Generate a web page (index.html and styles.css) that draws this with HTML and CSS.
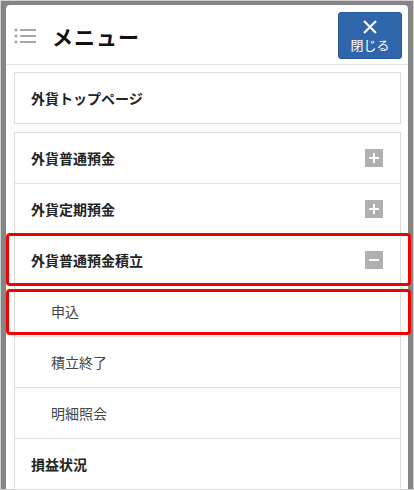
FILE: index.html
```html
<!DOCTYPE html>
<html lang="ja">
<head>
<meta charset="utf-8">
<link rel="stylesheet" href="styles.css">
</head>
<body>
<div class="frame">
  <div class="panel">
    <header class="head">
      <div class="head-left">
        <svg class="list-icon" width="22" height="16" viewBox="0 0 22 16">
          <circle cx="2" cy="2" r="1.6" fill="#a8a8a8"/>
          <circle cx="2" cy="8" r="1.6" fill="#a8a8a8"/>
          <circle cx="2" cy="14" r="1.6" fill="#a8a8a8"/>
          <rect x="6" y="1" width="16" height="2" fill="#a8a8a8"/>
          <rect x="6" y="7" width="16" height="2" fill="#a8a8a8"/>
          <rect x="6" y="13" width="16" height="2" fill="#a8a8a8"/>
        </svg>
        <h1 class="title">メニュー</h1>
      </div>
      <button class="close">
        <svg width="16" height="16" viewBox="0 0 16 16"><path d="M2 2 L14 14 M14 2 L2 14" stroke="#fff" stroke-width="2.2" fill="none"/></svg>
        <span>閉じる</span>
      </button>
    </header>
    <div class="list">
      <div class="box">
        <div class="row main">外貨トップページ</div>
      </div>
      <div class="box">
        <div class="row main"><span>外貨普通預金</span><span class="toggle plus"></span></div>
        <div class="row main"><span>外貨定期預金</span><span class="toggle plus"></span></div>
        <div class="row main"><span>外貨普通預金積立</span><span class="toggle minus"></span></div>
        <div class="row sub">申込</div>
        <div class="row sub">積立終了</div>
        <div class="row sub">明細照会</div>
        <div class="row main">損益状況</div>
      </div>
    </div>
  </div>
  <div class="mark m1"></div>
  <div class="mark m2"></div>
</div>
</body>
</html>
```

FILE: styles.css
```css
* { box-sizing: border-box; margin: 0; padding: 0; }
html, body { width: 414px; height: 490px; overflow: hidden; }
body {
  font-family: "Noto Sans CJK JP", "Noto Sans", sans-serif;
  background: #fff;
}
.frame {
  position: relative;
  width: 414px;
  height: 490px;
  border: 1px solid #d0d0d0;
  background: #858585;
  padding: 4px 5px 0 5px;
}
.panel {
  background: #fff;
  height: 100%;
  border-radius: 4px 4px 0 0;
}
.head {
  height: 60px;
  border-bottom: 1px solid #e2e2e2;
  display: flex;
  align-items: center;
  justify-content: space-between;
  padding: 0 6px 0 8px;
}
.head-left { display: flex; align-items: center; gap: 16px; margin-top: 3px; }
.title { font-size: 21px; font-weight: 700; color: #111; letter-spacing: 1px; }
.close {
  width: 64px;
  height: 47px;
  background: #2f66ab;
  border: 1px solid #255a9c;
  border-radius: 3px;
  color: #fff;
  display: flex;
  flex-direction: column;
  align-items: center;
  justify-content: center;
  gap: 3px;
  font-family: "Noto Sans CJK JP", sans-serif;
  font-size: 13px;
  line-height: 1;
  margin-top: 1px;
}
.list {
  padding: 7px 7px 0 8px;
  display: flex;
  flex-direction: column;
  gap: 8px;
}
.box {
  border: 1px solid #dcdcdc;
}
.row {
  height: 51px;
  display: flex;
  align-items: center;
  justify-content: space-between;
  padding: 0 17px 0 16px;
  font-size: 14px;
  color: #222;
  border-top: 1px solid #e0e0e0;
}
.box .row:first-child { border-top: none; height: 50px; }
.main { font-weight: 700; }
.sub { padding-left: 36px; font-weight: 400; color: #444; }
.toggle {
  width: 18px;
  height: 18px;
  background: #b0b0b0;
  position: relative;
}
.toggle::before {
  content: "";
  position: absolute;
  left: 4px; top: 8px;
  width: 10px; height: 2px;
  background: #fff;
}
.plus::after {
  content: "";
  position: absolute;
  left: 8px; top: 4px;
  width: 2px; height: 10px;
  background: #fff;
}
.mark {
  position: absolute;
  border: 3px solid #f20000;
  border-radius: 4px;
  left: 5px;
  width: 405px;
}
.m1 { top: 232px; height: 53px; }
.m2 { top: 288px; height: 46px; }
```
